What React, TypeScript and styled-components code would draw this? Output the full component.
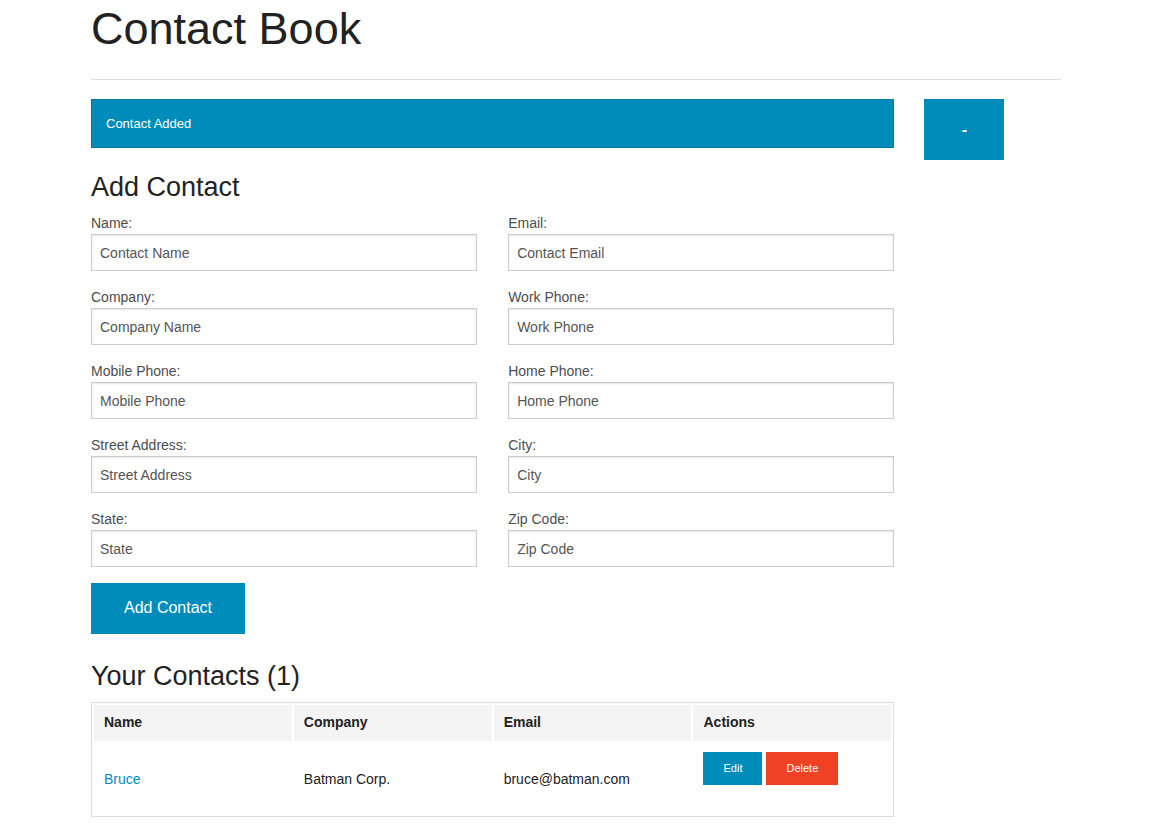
import React from "react";
import styled, { createGlobalStyle } from "styled-components";

const Global = createGlobalStyle`
  html, body { margin: 0; padding: 0; background: #ffffff; }
  body {
    font-family: "Liberation Sans", Arial, Helvetica, sans-serif;
    color: #222222;
    font-size: 16px;
    line-height: 1.5;
  }
  * { box-sizing: border-box; }
`;

const Page = styled.div`
  max-width: 1000px;
  margin: 0 auto;
  padding: 0 15px;
`;

const Title = styled.h1`
  margin: 0;
  font-size: 45px;
  line-height: 58px;
  font-weight: normal;
  color: #222222;
`;

const Rule = styled.hr`
  margin: 21px 0 19px;
  border: 0;
  border-top: 1px solid #dddddd;
  height: 0;
`;

const Row = styled.div`
  display: grid;
  grid-template-columns: calc((100% + 30px) * 10 / 12 - 30px) 1fr;
  column-gap: 30px;
  align-items: start;
`;

const Main = styled.div`
  min-width: 0;
`;

const Side = styled.div`
  min-width: 0;
`;

const Alert = styled.div`
  height: 49px;
  padding: 0 24px 0 14px;
  display: flex;
  align-items: center;
  background: #008cba;
  border: 1px solid #0078a0;
  color: #ffffff;
  font-size: 13px;
  margin-bottom: 20px;
`;

const ToggleButton = styled.button`
  display: flex;
  align-items: center;
  justify-content: center;
  width: 80px;
  height: 61px;
  padding: 0;
  border: 0;
  background: #008cba;
  color: #ffffff;
  font-family: inherit;
  font-size: 16px;
  font-weight: bold;
  cursor: pointer;
`;

const Heading = styled.h3<{ $mt: number; $mb: number }>`
  margin: ${(p) => p.$mt}px 0 ${(p) => p.$mb}px;
  font-size: 27px;
  line-height: 38px;
  font-weight: normal;
  color: #222222;
`;

const FormGrid = styled.div`
  display: grid;
  grid-template-columns: 1fr 1fr;
  column-gap: 31px;
`;

const Field = styled.div`
  display: flex;
  flex-direction: column;
`;

const Label = styled.label`
  font-size: 14px;
  line-height: 21px;
  color: #4d4d4d;
`;

const Input = styled.input`
  height: 37px;
  width: 100%;
  padding: 8px;
  margin: 0 0 16px;
  border: 1px solid #cccccc;
  box-shadow: inset 0 1px 2px rgba(0, 0, 0, 0.1);
  font-family: inherit;
  font-size: 14px;
  color: rgba(0, 0, 0, 0.75);
  background: #ffffff;
  outline: none;
  &::placeholder {
    color: #555555;
    opacity: 1;
  }
`;

const PrimaryButton = styled.button`
  display: inline-block;
  padding: 16px 33px 17px;
  border: 0;
  background: #008cba;
  color: #ffffff;
  font-family: inherit;
  font-size: 16px;
  line-height: 18px;
  margin: 0 0 20px;
  cursor: pointer;
`;

const Table = styled.table`
  width: 100%;
  table-layout: fixed;
  border: 1px solid #dddddd;
  border-spacing: 2px;
  background: #ffffff;
  margin: 0;
`;

const Th = styled.th`
  background: #f4f4f4;
  padding: 8px 10px 10px;
  font-size: 14px;
  line-height: 18px;
  font-weight: bold;
  color: #222222;
  text-align: left;
`;

const Td = styled.td`
  padding: 9px 10px;
  font-size: 14px;
  line-height: 18px;
  color: #222222;
  vertical-align: middle;
`;

const NameLink = styled.a`
  color: #008cba;
  text-decoration: none;
`;

const Actions = styled.div`
  display: flex;
  gap: 4px;
`;

const TinyButton = styled.button<{ $danger?: boolean }>`
  padding: 10px 20px 11px;
  margin: 0 0 20px;
  border: 0;
  background: ${(p) => (p.$danger ? "#f04124" : "#008cba")};
  color: #ffffff;
  font-family: inherit;
  font-size: 11px;
  line-height: 12px;
  cursor: pointer;
`;

const fields: [string, string][] = [
  ["Name:", "Contact Name"],
  ["Email:", "Contact Email"],
  ["Company:", "Company Name"],
  ["Work Phone:", "Work Phone"],
  ["Mobile Phone:", "Mobile Phone"],
  ["Home Phone:", "Home Phone"],
  ["Street Address:", "Street Address"],
  ["City:", "City"],
  ["State:", "State"],
  ["Zip Code:", "Zip Code"],
];

export default function App() {
  return (
    <>
      <Global />
      <Page>
        <Title>Contact Book</Title>
        <Rule />
        <Row>
          <Main>
            <Alert>Contact Added</Alert>
            <Heading $mt={0} $mb={7}>
              Add Contact
            </Heading>
            <FormGrid>
              {fields.map(([label, ph]) => (
                <Field key={label}>
                  <Label>{label}</Label>
                  <Input type="text" placeholder={ph} />
                </Field>
              ))}
            </FormGrid>
            <PrimaryButton>Add Contact</PrimaryButton>
            <Heading $mt={3} $mb={7}>
              Your Contacts (1)
            </Heading>
            <Table>
              <thead>
                <tr>
                  <Th>Name</Th>
                  <Th>Company</Th>
                  <Th>Email</Th>
                  <Th>Actions</Th>
                </tr>
              </thead>
              <tbody>
                <tr>
                  <Td>
                    <NameLink href="#">Bruce</NameLink>
                  </Td>
                  <Td>Batman Corp.</Td>
                  <Td>bruce@batman.com</Td>
                  <Td>
                    <Actions>
                      <TinyButton>Edit</TinyButton>
                      <TinyButton $danger>Delete</TinyButton>
                    </Actions>
                  </Td>
                </tr>
              </tbody>
            </Table>
          </Main>
          <Side>
            <ToggleButton>-</ToggleButton>
          </Side>
        </Row>
      </Page>
    </>
  );
}
